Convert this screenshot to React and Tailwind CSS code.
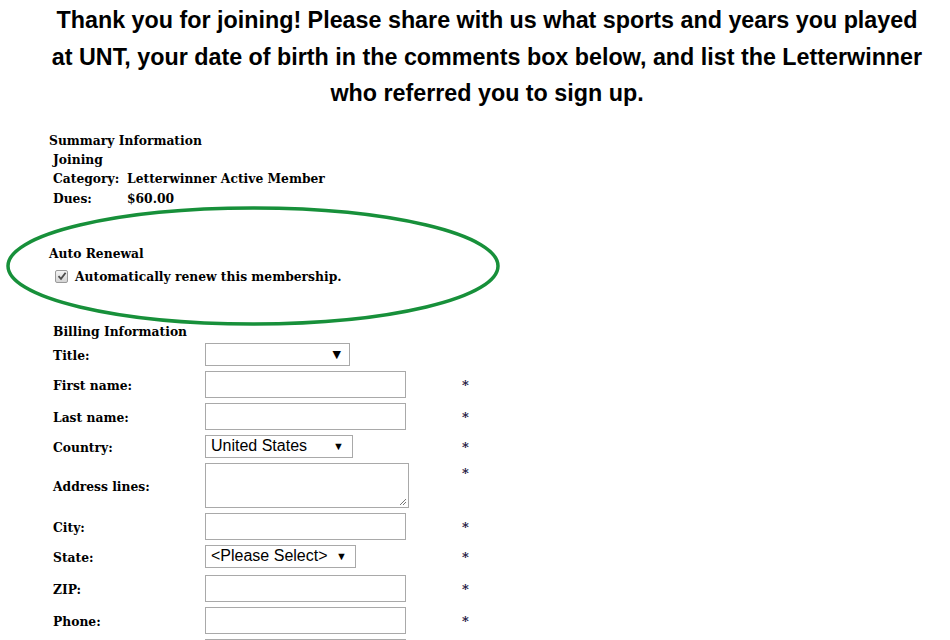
import React from "react";

const serif = { fontFamily: '"DejaVu Serif", serif' };
const sans = { fontFamily: '"Liberation Sans", Arial, sans-serif' };

function Caret() {
  return <span className="text-[11px] leading-none text-black">▼</span>;
}

function Star() {
  return <span className="text-[13px] font-bold text-[#1d1440]">*</span>;
}

function GreyCheck() {
  return (
    <div className="w-[13px] h-[13px] rounded-[2px] border border-[#9a9a9a] bg-gradient-to-b from-[#f4f4f4] to-[#d4d4d4] flex items-center justify-center">
      <svg width="10" height="10" viewBox="0 0 10 10">
        <path d="M1.5 5.2 L4 7.8 L8.6 1.8" fill="none" stroke="#4d4d4d" strokeWidth="1.8" />
      </svg>
    </div>
  );
}

export default function App() {
  const rows = [
    { label: "First name:", kind: "input", star: true },
    { label: "Last name:", kind: "input", star: true },
    { label: "Country:", kind: "select", value: "United States", w: "w-[148px]", star: true },
    { label: "Address lines:", kind: "textarea", star: true },
    { label: "City:", kind: "input", star: true },
    { label: "State:", kind: "select", value: "<Please Select>", w: "w-[151px]", star: true, extra: true },
    { label: "ZIP:", kind: "input", star: true },
    { label: "Phone:", kind: "input", star: true },
    { label: "", kind: "input", star: false },
  ];

  return (
    <div className="relative w-[950px] h-[640px] overflow-hidden bg-white text-black">
      <h1
        className="ml-[49px] w-[876px] pt-[2px] text-center text-[23.3px] font-bold leading-[36.5px] text-black"
        style={sans}
      >
        Thank you for joining! Please share with us what sports and years you played at UNT, your date of birth in the comments box below, and list the Letterwinner who referred you to sign up.
      </h1>

      <div className="mt-[19px] pl-[49px] text-[12.3px] font-bold leading-[19.4px]" style={serif}>
        <div>Summary Information</div>
        <div className="pl-[4px]">
          <div>Joining</div>
          <div className="flex">
            <span className="w-[74px]">Category:</span>
            <span>Letterwinner Active Member</span>
          </div>
          <div className="flex">
            <span className="w-[74px]">Dues:</span>
            <span>$60.00</span>
          </div>
        </div>

        <div className="mt-[36px]">Auto Renewal</div>
        <div className="flex items-center gap-[7px] pl-[6px] mt-[3px]">
          <GreyCheck />
          <span>Automatically renew this membership.</span>
        </div>
      </div>

      <svg
        className="absolute left-0 top-0 pointer-events-none"
        width="950"
        height="640"
        viewBox="0 0 950 640"
      >
        <ellipse cx="253" cy="266" rx="245" ry="58" fill="none" stroke="#17903a" strokeWidth="3.5" />
      </svg>

      <div className="mt-[36px] pl-[53px] text-[12.3px] font-bold" style={serif}>
        <div className="leading-[19px]">Billing Information</div>
        <div className="flex flex-col gap-[5px] mt-[2px]">
          <div className="flex items-center">
            <span className="w-[152px] mt-[4px]">Title:</span>
            <div className="w-[145px] h-[23px] border border-[#a9a9a9] flex items-center justify-end pr-[8px]">
              <Caret />
            </div>
          </div>
          {rows.map((r, i) => (
            <div key={i} className={`flex items-center ${r.extra ? "mb-[2px]" : ""}`}>
              <span className="w-[152px] mt-[4px]">{r.label}</span>
              <div className="w-[257px] flex">
                {r.kind === "input" && (
                  <div className="w-[201px] h-[27px] border border-[#a9a9a9]" />
                )}
                {r.kind === "select" && (
                  <div
                    className={`${r.w} h-[23px] border border-[#a9a9a9] flex items-center justify-between pl-[5px] pr-[8px] text-[16px] font-normal`}
                    style={sans}
                  >
                    <span>{r.value}</span>
                    <Caret />
                  </div>
                )}
                {r.kind === "textarea" && (
                  <div className="relative w-[204px] h-[45px] border border-[#a9a9a9]">
                    <svg className="absolute right-[1px] bottom-[1px]" width="9" height="9" viewBox="0 0 9 9">
                      <path d="M8 2 L2 8 M8 5 L5 8" stroke="#777" strokeWidth="1" />
                    </svg>
                  </div>
                )}
              </div>
              <span className={r.kind === "textarea" ? "self-start mt-[1px]" : "mt-[2px]"}>
                {r.star ? <Star /> : null}
              </span>
            </div>
          ))}
        </div>
      </div>
    </div>
  );
}
